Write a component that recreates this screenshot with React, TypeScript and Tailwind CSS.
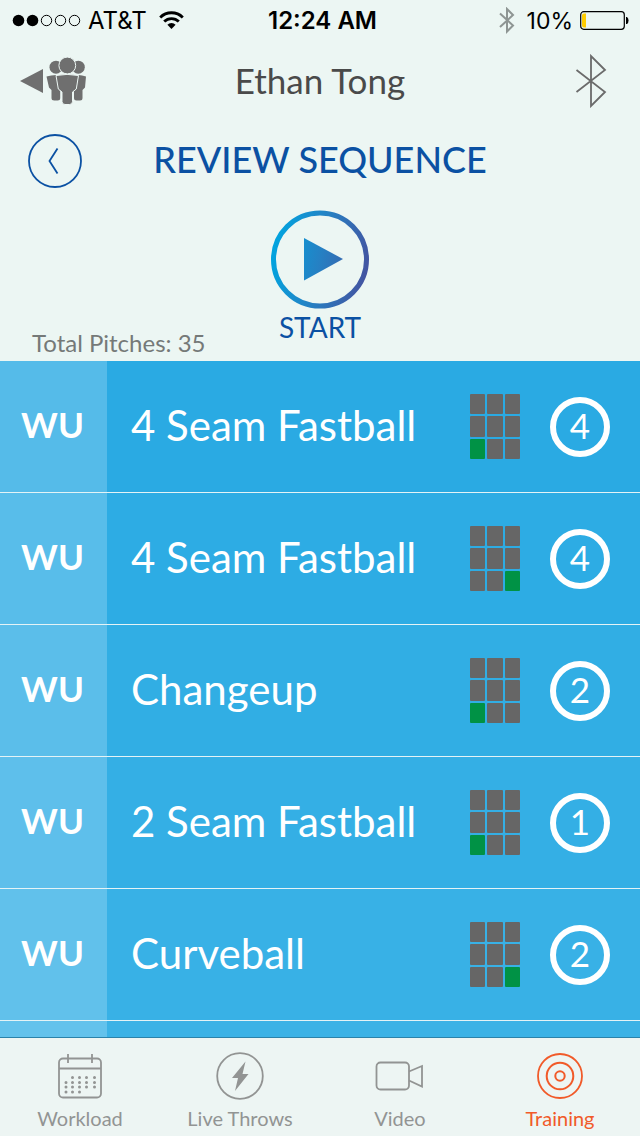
import type { ReactNode } from "react";
import clsx from "clsx";

type Pitch = {
  id: number;
  phase: string;
  name: string;
  zone: number;
  count: number;
  tone: string;
  phaseTone: string;
};

// zone is the index of the target cell, left to right and top to bottom
const PITCHES: Pitch[] = [
  { id: 1, phase: "WU", name: "4 Seam Fastball", zone: 6, count: 4, tone: "bg-[#2aaae3]", phaseTone: "bg-[#55bbe9]" },
  { id: 2, phase: "WU", name: "4 Seam Fastball", zone: 8, count: 4, tone: "bg-[#2dace4]", phaseTone: "bg-[#58bdea]" },
  { id: 3, phase: "WU", name: "Changeup", zone: 6, count: 2, tone: "bg-[#31aee4]", phaseTone: "bg-[#5bbeea]" },
  { id: 4, phase: "WU", name: "2 Seam Fastball", zone: 6, count: 1, tone: "bg-[#34afe5]", phaseTone: "bg-[#5ebfeb]" },
  { id: 5, phase: "WU", name: "Curveball", zone: 8, count: 2, tone: "bg-[#38b1e6]", phaseTone: "bg-[#61c1eb]" },
];

const ZONE_CELLS = [0, 1, 2, 3, 4, 5, 6, 7, 8];

function StatusBar() {
  return (
    <div className="grid h-10 grid-cols-[1fr_auto_1fr] items-center pl-3 pr-[11px] font-['Inter',sans-serif] text-2xl text-black">
      <div className="flex items-center">
        <svg width="70" height="14" viewBox="0 0 70 14" fill="none" stroke="currentColor" aria-hidden>
          <circle cx="6.5" cy="7.5" r="5.8" fill="currentColor" stroke="none" />
          <circle cx="20.5" cy="7.5" r="5.8" fill="currentColor" stroke="none" />
          <circle cx="34.5" cy="7.5" r="5.2" />
          <circle cx="48.5" cy="7.5" r="5.2" />
          <circle cx="62.5" cy="7.5" r="5.2" />
        </svg>
        <span className="ml-[6px] pt-[2px]">AT&amp;T</span>
        <svg className="ml-3" width="25" height="19" viewBox="0 0 25 19" fill="none" stroke="currentColor" aria-hidden>
          <path d="M1.2 6.4a16 16 0 0 1 22.6 0" strokeWidth="2.8" />
          <path d="M5.2 10.6a10.3 10.3 0 0 1 14.6 0" strokeWidth="2.8" />
          <path d="M12.5 18 8.4 13.8a5.800 5.800 0 0 1 8.200 0z" fill="currentColor" stroke="none" />
        </svg>
      </div>
      <span className="pl-1 pt-[2px] font-semibold">12:24 AM</span>
      <div className="flex items-center justify-end">
        <svg width="16" height="27" viewBox="0 0 16 27" fill="none" stroke="#8e9593" strokeWidth="2" aria-hidden>
          <path d="M1 6.500 14 18.500 8 24.500V2l6 6L1 20" />
        </svg>
        <span className="ml-3 pt-[2px] text-[23px]">10%</span>
        <svg className="ml-[6px]" width="50" height="20" viewBox="0 0 50 20" aria-hidden>
          <rect x="1.700" y="1.700" width="43.600" height="17.600" rx="3" fill="none" stroke="#000" strokeWidth="1.200" />
          <path d="M5 3.500h2v14H5a2 2 0 0 1-2-2v-10a2 2 0 0 1 2-2z" fill="#fc0" />
          <path d="M47 7h1q1.500 1 1.500 3.500T48 14h-1z" />
        </svg>
      </div>
    </div>
  );
}

function TeamIcon() {
  return (
    <svg width="66" height="48" viewBox="0 0 66 48" fill="#6f6f6f" aria-hidden>
      <path d="M0 24 23 12v24z" />
      <circle cx="36" cy="10.200" r="6.500" />
      <circle cx="58.300" cy="10.200" r="6.500" />
      <path d="M26.500 19.500Q31 18 36.500 18L38.500 32l1.700 2v7q0 2.500-2.500 2.500h-3.500q-2.700 0-2.700-2.500v-8L29 30.500z" />
      <path d="M66 19.500Q62 18 58.500 18L56 32l-2 2v7q0 2.500 2.500 2.500H60q2.500 0 2.500-2.500v-8l2.500-2.500z" />
      <path
        d="M36 18.500q11-2.200 22.500 0L56.300 32 52.500 35v9.500q0 3-3 3h-4.500q-3 0-3-3V35l-3.700-3z"
        stroke="#ecf6f3"
        strokeWidth="1"
      />
      <circle cx="47.300" cy="8.500" r="8.400" stroke="#ecf6f3" strokeWidth="1" />
    </svg>
  );
}

function Header() {
  return (
    <header className="grid h-[82px] grid-cols-[1fr_auto_1fr] items-center px-5">
      <button type="button" aria-label="Back to team" className="justify-self-start">
        <TeamIcon />
      </button>
      <h1 className="pb-[2px] text-[35px] leading-10 text-[#4a4a4a]">Ethan Tong</h1>
      <button type="button" aria-label="Bluetooth" className="mr-[13px] justify-self-end">
        <svg width="32" height="54" viewBox="0 0 32 54" fill="none" stroke="#6b6b6b" strokeWidth="1.800" aria-hidden>
          <path d="M1.500 16 30 38 16 52V2l14 14L1.500 38" />
        </svg>
      </button>
    </header>
  );
}

function TitleRow() {
  return (
    <div className="grid grid-cols-[1fr_auto_1fr] items-center px-7 pt-3 text-[#0b51a3]">
      <button type="button" aria-label="Back" className="justify-self-start">
        <svg width="54" height="54" viewBox="0 0 54 54" fill="none" stroke="currentColor" strokeWidth="1.800" aria-hidden>
          <circle cx="27" cy="27" r="26" />
          <path d="M29.500 14.500 21.500 27l8 12.500" />
        </svg>
      </button>
      <h2 className="pb-1 text-4xl font-medium">REVIEW SEQUENCE</h2>
    </div>
  );
}

function StartRow() {
  return (
    <div className="grid grid-cols-[1fr_auto_1fr] items-end px-8 pt-[22px]">
      <p className="pb-[2px] text-2xl text-[#757978]">Total Pitches: 35</p>
      <button type="button" className="mb-4 flex flex-col items-center text-[28px] leading-9 text-[#0b51a3]">
        <svg width="98" height="99" viewBox="0 0 98 99" aria-hidden>
          <defs>
            <linearGradient id="play" gradientUnits="userSpaceOnUse" x1="0" y1="40" x2="98" y2="60">
              <stop offset="0" stopColor="#00a5e0" />
              <stop offset="0.5" stopColor="#2680c3" />
              <stop offset="1" stopColor="#4453a0" />
            </linearGradient>
          </defs>
          <circle cx="49" cy="49.500" r="46.500" fill="none" stroke="url(#play)" strokeWidth="5" />
          <path d="M33 28v42.500L72 49z" fill="url(#play)" />
        </svg>
        START
      </button>
    </div>
  );
}

function StrikeZone({ target }: { target: number }) {
  return (
    <div className="grid h-[65px] w-[50px] shrink-0 grid-cols-3 grid-rows-3 gap-[2px]">
      {ZONE_CELLS.map((cell) => (
        <span key={cell} className={clsx("rounded-[1px]", cell === target ? "bg-[#009245]" : "bg-[#666666]")} />
      ))}
    </div>
  );
}

function PitchRow({ pitch }: { pitch: Pitch }) {
  return (
    <li className={clsx("flex h-[132px] shrink-0 items-stretch border-b border-[#e4f3f6] text-white", pitch.tone)}>
      <div className={clsx("flex w-[107px] shrink-0 items-center justify-center pb-1 pr-[2px] text-[35px] font-bold", pitch.phaseTone)}>
        {pitch.phase}
      </div>
      <div className="flex min-w-0 flex-1 items-center pl-6 pr-[30px]">
        <span className="flex-1 whitespace-nowrap pb-1 text-[42px] leading-[48px]">{pitch.name}</span>
        <StrikeZone target={pitch.zone} />
        <span className="ml-[30px] flex size-[60px] shrink-0 items-center justify-center rounded-full border-[6px] border-white pb-[2px] text-[35px]">
          {pitch.count}
        </span>
      </div>
    </li>
  );
}

function Tab({ label, active, children }: { label: string; active?: boolean; children: ReactNode }) {
  return (
    <button
      type="button"
      aria-current={active ? "page" : undefined}
      className={clsx("flex flex-col items-center pt-[13px] text-xl leading-7", active ? "text-[#f15a29]" : "text-[#929493]")}
    >
      <svg width="50" height="50" viewBox="0 0 50 50" fill="none" stroke="currentColor" strokeWidth="1.800" aria-hidden>
        {children}
      </svg>
      <span className="mt-[3px]">{label}</span>
    </button>
  );
}

function TabBar() {
  return (
    <nav className="grid h-[99px] shrink-0 grid-cols-4 border-t border-[#2b82aa] bg-[#edf5f3]">
      <Tab label="Workload">
        <rect x="4" y="7.500" width="42" height="39" rx="4" />
        <path d="M4 17.500h42M13 3v9M37 3v9" />
        <path
          d="M17.500 26.500h0M24.500 26.500h0M31.500 26.500h0M39.500 26.500h0M11 31.500h0M17.500 31.500h0M24.500 31.500h0M31.500 31.500h0M39.500 31.500h0M11 36h0M17.500 36h0M24.500 36h0M31.500 36h0M39.500 36h0M11 41h0M17.500 41h0M24.500 41h0"
          strokeWidth="3"
          strokeLinecap="round"
        />
      </Tab>
      <Tab label="Live Throws">
        <circle cx="25" cy="25" r="22.800" />
        <path d="M30.500 10.500 17 27h6L20 40l13.500-17h-6z" fill="currentColor" stroke="none" />
      </Tab>
      <Tab label="Video">
        <rect x="1.500" y="11.500" width="32.500" height="27" rx="4" />
        <path d="M34 20.500 47 15v20.500L34 29.500" />
      </Tab>
      <Tab label="Training" active>
        <circle cx="25" cy="25" r="22" />
        <circle cx="25" cy="25" r="13.300" strokeWidth="2" />
        <circle cx="25" cy="25" r="4.700" strokeWidth="2" />
      </Tab>
    </nav>
  );
}

export default function App() {
  return (
    <div className="flex h-screen flex-col overflow-hidden bg-[#ecf6f3] font-['Lato',sans-serif]">
      <StatusBar />
      <Header />
      <TitleRow />
      <StartRow />
      <div className="flex min-h-0 flex-1 flex-col overflow-hidden">
        <ul className="flex flex-col">
          {PITCHES.map((pitch) => (
            <PitchRow key={pitch.id} pitch={pitch} />
          ))}
        </ul>
        {/* rest of the list area keeps the two row colours */}
        <div className="flex flex-1 bg-[#3bb2e6]">
          <div className="w-[107px] bg-[#63c2ec]" />
        </div>
      </div>
      <TabBar />
    </div>
  );
}
